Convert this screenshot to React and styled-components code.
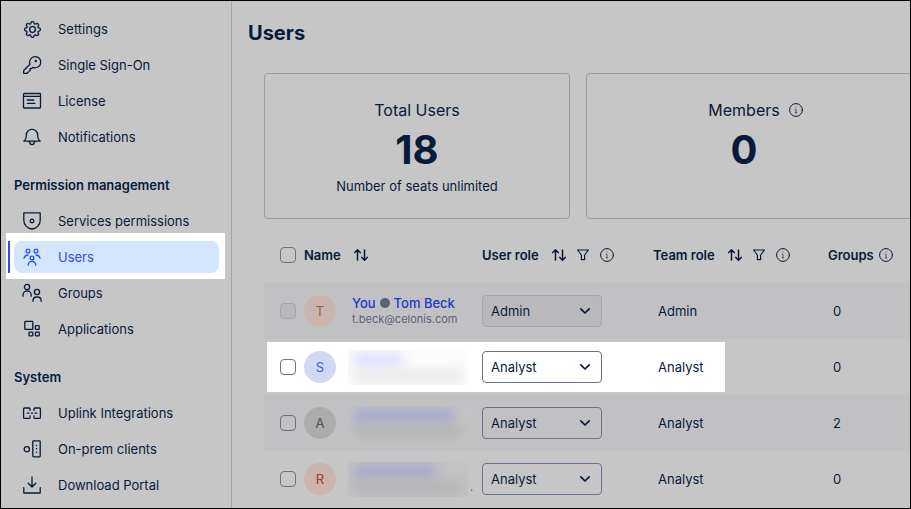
import styled, { createGlobalStyle } from 'styled-components'
import { BsGear } from 'react-icons/bs'

const colors = {
    background: '#c6c6c6',
    stripe: '#c1c1c3',
    line: '#a3a3a6',
    cardLine: '#9c9ca8',
    text: '#081a3a',
    secondaryText: '#5d6078',
    link: '#2338c6',
    active: '#2b4cf2',
    activeBackground: '#d4e5ff',
    control: '#6d6f8f',
    disabled: '#b9b9bb',
    disabledLine: '#a6a6aa',
}

const font = {
    small: '11px',
    text: '13px',
    label: '16px',
    title: '20px',
    figure: '40px',
}

const GlobalStyle = createGlobalStyle`
    * {
        box-sizing: border-box;
    }
    body {
        margin: 0;
        background-color: ${colors.background};
        color: ${colors.text};
        font-family: Inter, 'Liberation Sans', sans-serif;
        font-size: ${font.text};
        line-height: 20px;
    }
`
const Frame = styled.div`
    display: flex;
    min-height: 100vh;
    border: 1px solid #000000;
    overflow: hidden;
`
const SideBar = styled.nav`
    flex: 0 0 231px;
    padding: 10px 12px 0 13px;
    border-right: 1px solid ${colors.line};
`
const MenuTitle = styled.h2`
    height: 48px;
    margin: 0;
    padding-top: 12px;
    font-size: ${font.text};
    font-weight: 600;
    line-height: 36px;
`
const MenuList = styled.ul`
    margin: 0;
    padding: 0;
    list-style: none;
`
const MenuItem = styled.li`
    position: relative;
    z-index: 0;
    padding: 2px 0;

    &::before {
        content: '';
        display: ${(props) => (props.$active ? 'block' : 'none')};
        position: absolute;
        inset: -6px -6px -4px -8px;
        z-index: -1;
        background-color: #ffffff;
    }
    &::after {
        content: '';
        display: ${(props) => (props.$active ? 'block' : 'none')};
        position: absolute;
        top: 2px;
        bottom: 2px;
        left: -6px;
        width: 2px;
        background-color: ${colors.active};
    }
`
const MenuLink = styled.a`
    display: flex;
    align-items: center;
    gap: 16px;
    height: 32px;
    padding: 0 8px;
    border-radius: 8px;
    text-decoration: none;
    color: ${(props) => (props.$active ? colors.active : colors.text)};
    background-color: ${(props) =>
        props.$active ? colors.activeBackground : 'transparent'};
`
const Icon = styled.svg`
    flex: none;
    width: ${(props) => props.$size || 20}px;
    height: ${(props) => props.$size || 20}px;
    fill: none;
    stroke: currentColor;
    stroke-width: ${(props) => props.$stroke || 1.3};
    stroke-linecap: round;
    stroke-linejoin: round;
`
const IconBox = styled.span`
    display: grid;
    place-items: center;
    width: 20px;
    height: 20px;
`
const Main = styled.main`
    flex: 1;
    min-width: 0;
    padding: 16px 0 0 16px;
`
const PageTitle = styled.h1`
    margin: 0;
    font-size: ${font.title};
    font-weight: 700;
    line-height: 32px;
`
const Content = styled.div`
    padding: 24px 0 0 16px;
`
const Cards = styled.div`
    display: grid;
    grid-template-columns: 306px 1fr;
    gap: 16px;
    margin-right: -16px;
`
const Card = styled.section`
    display: grid;
    grid-template-columns: auto auto;
    grid-template-rows: 28px 52px 20px;
    column-gap: ${(props) => (props.$hasInfo ? '8px' : '0')};
    justify-content: center;
    align-items: center;
    justify-items: center;
    height: 146px;
    padding-top: 22px;
    align-content: start;
    border: 1px solid ${colors.cardLine};
    border-radius: 4px;
`
const CardLabel = styled.h3`
    grid-column: 1;
    margin: 0;
    font-size: ${font.label};
    font-weight: 400;
`
const CardFigure = styled.div`
    grid-column: 1;
    font-size: ${font.figure};
    font-weight: 700;
    line-height: 52px;
`
const CardNote = styled.div`
    grid-column: 1;
`
const UserTable = styled.table`
    width: 100%;
    margin-top: 8px;
    border-collapse: collapse;
    table-layout: fixed;
`
const Column = styled.col`
    width: ${(props) => props.$width};
`
const HeadCell = styled.th`
    height: 56px;
    padding: 0;
    text-align: left;
    font-weight: 600;
`
const HeadContent = styled.div`
    display: flex;
    align-items: center;
    gap: 8px;
`
const HeadLabel = styled.span`
    margin-right: ${(props) => (props.$tight ? '-4px' : '4px')};
`
const Row = styled.tr`
    position: relative;
    z-index: 0;
    background-color: ${(props) =>
        props.$striped ? colors.stripe : 'transparent'};
`
const Cell = styled.td`
    height: 56px;
    padding: 0 0 0 ${(props) => (props.$inset ? '5px' : '0')};
    vertical-align: middle;
`
const SelectCell = styled(Cell)`
    position: relative;

    &::before {
        content: '';
        display: ${(props) => (props.$spotlight ? 'block' : 'none')};
        position: absolute;
        top: 3px;
        left: 3px;
        width: 458px;
        height: 50px;
        z-index: -1;
        background-color: #ffffff;
    }
`
const CheckBox = styled.input`
    appearance: none;
    display: block;
    width: 16px;
    height: 16px;
    margin: 0 0 0 16px;
    border: 1px solid ${colors.control};
    border-radius: 4px;

    &:disabled {
        border-color: ${colors.disabledLine};
        background-color: ${colors.disabled};
    }
`
const Person = styled.div`
    display: flex;
    align-items: center;
    gap: 12px;
`
const Avatar = styled.span`
    flex: none;
    width: 32px;
    height: 32px;
    border-radius: 50%;
    text-align: center;
    line-height: 32px;
    color: ${(props) => props.$color};
    background-color: ${(props) => props.$background};
`
const Identity = styled.div`
    padding-left: 4px;
`
const NameLink = styled.a`
    display: flex;
    align-items: center;
    gap: 4px;
    height: 16px;
    font-weight: 500;
    text-decoration: none;
    color: ${colors.link};
`
const Dot = styled.span`
    width: 10px;
    height: 10px;
    border-radius: 50%;
    background-color: ${colors.secondaryText};
`
const Email = styled.div`
    font-size: ${font.small};
    line-height: 16px;
    color: ${colors.secondaryText};
`
const Redacted = styled.div`
    display: flex;
    flex-direction: column;
    gap: 2px;
    width: 120px;
    height: 35px;
    padding: 3px 6px;
    overflow: hidden;
    background-color: ${(props) => (props.$light ? '#fcfcfc' : '#c3c3c4')};
`
const Smear = styled.span`
    flex: none;
    width: ${(props) => props.$width};
    height: 14px;
    filter: blur(6px);
    background-color: ${(props) => props.$color};
`
const SmearEnd = styled.span`
    align-self: flex-end;
    margin-left: -10px;
    font-size: ${font.small};
    color: ${colors.secondaryText};
`
const SelectWrapper = styled.div`
    position: relative;
    width: 120px;
    color: ${colors.text};
`
const RoleSelect = styled.select`
    appearance: none;
    display: block;
    width: 100%;
    height: 32px;
    padding: 0 32px 0 8px;
    border: 1px solid ${colors.control};
    border-radius: 4px;
    background-color: transparent;
    color: ${colors.text};
    font: inherit;

    &:disabled {
        opacity: 1;
        border-color: ${colors.disabledLine};
        background-color: ${colors.disabled};
    }
`
const Chevron = styled(Icon)`
    position: absolute;
    top: 8px;
    right: 9px;
    pointer-events: none;
`
const IconButton = styled.button`
    display: block;
    width: 16px;
    height: 16px;
    padding: 0;
    border: 0;
    background: none;
    color: inherit;
    cursor: pointer;
`

const icons = {
    key: (
        <>
            <path d="M8 9.2A5.6 5.6 0 1 1 11 12.3L9.6 13.6H8.2v1.6L6.8 16.6 5 18.3H1.7v-2.8z" />
            <circle cx="13.8" cy="6.1" r="0.6" />
        </>
    ),
    license: (
        <>
            <rect x="1.5" y="2.5" width="17" height="14.5" rx="0.8" />
            <path d="M1.5 5.4h17M5.3 9h6.4M5.3 12.3h7.6" />
        </>
    ),
    bell: (
        <path d="M1.8 14.2h16.4c-1.6-1.2-2.5-2.8-2.5-5V8a5.7 5.7 0 0 0-11.4 0v1.2c0 2.2-.9 3.8-2.5 5zM7.4 14.6c.2 1.9 1.2 3 2.6 3s2.4-1.1 2.6-3" />
    ),
    shield: (
        <>
            <path d="M1.8 1.8h16.4v7.4c0 4.6-3.4 8.2-8.2 8.8-4.8-.6-8.2-4.2-8.2-8.8z" />
            <circle cx="10" cy="10" r="1.8" />
        </>
    ),
    users: (
        <>
            <circle cx="6" cy="4" r="1.9" />
            <circle cx="14" cy="4" r="1.9" />
            <circle cx="10" cy="11" r="1.9" />
            <path d="M6.2 18.2a3.8 3.8 0 0 1 7.6 0M2 11.2a4.2 4.2 0 0 1 4-3.2M18 11.2A4.2 4.2 0 0 0 14 8" />
        </>
    ),
    groups: (
        <>
            <circle cx="5" cy="4" r="2.6" />
            <circle cx="15" cy="9" r="2.6" />
            <path d="M1 13.2v-1.4A3.8 3.8 0 0 1 4.8 8h.6a3.8 3.8 0 0 1 3.8 3.8v1.4M11 18.4v-1A3.6 3.6 0 0 1 14.6 14h.9a3.6 3.6 0 0 1 3.6 3.4v1" />
        </>
    ),
    apps: (
        <>
            <rect x="2.8" y="2.4" width="8" height="8" rx="0.6" />
            <rect x="13.4" y="6.6" width="3.8" height="3.8" rx="0.6" />
            <rect x="7" y="13.1" width="3.8" height="3.8" rx="0.6" />
            <rect x="13.4" y="13.1" width="3.8" height="3.8" rx="0.6" />
        </>
    ),
    uplink: (
        <>
            <path d="M8 7.4V6a1 1 0 0 0-1-1H2.6a1 1 0 0 0-1 1v8.4a1 1 0 0 0 1 1H7a1 1 0 0 0 1-1V13M12 7.4V6a1 1 0 0 1 1-1h4.4a1 1 0 0 1 1 1v8.4a1 1 0 0 1-1 1H13a1 1 0 0 1-1-1V13" />
            <path d="M5.4 10.2h1.6M9.4 10.2h1.2M13 10.2h1.6" />
        </>
    ),
    onPrem: (
        <>
            <circle cx="4.8" cy="10.2" r="2.6" />
            <rect x="10.8" y="1.8" width="7.4" height="16" rx="0.8" />
            <path d="M14.5 6.3v.2M14.5 9.7v.2M14.5 13.1v.2" />
        </>
    ),
    download: (
        <path d="M1.8 12.6V18h16.4v-5.4M10 1.8v10M6.2 8.2l3.8 3.8 3.8-3.8" />
    ),
}

const menus = [
    {
        items: [
            { label: 'Settings', icon: 'settings' },
            { label: 'Single Sign-On', icon: 'key' },
            { label: 'License', icon: 'license' },
            { label: 'Notifications', icon: 'bell' },
        ],
    },
    {
        title: 'Permission management',
        items: [
            { label: 'Services permissions', icon: 'shield' },
            { label: 'Users', icon: 'users', active: true },
            { label: 'Groups', icon: 'groups' },
            { label: 'Applications', icon: 'apps' },
        ],
    },
    {
        title: 'System',
        items: [
            { label: 'Uplink Integrations', icon: 'uplink' },
            { label: 'On-prem clients', icon: 'onPrem' },
            { label: 'Download Portal', icon: 'download' },
        ],
    },
]

const users = [
    {
        initial: 'T',
        color: '#a85c3e',
        background: '#c9b5ae',
        name: 'Tom Beck',
        email: 't.beck@celonis.com',
        role: 'Admin',
        groups: 0,
        self: true,
    },
    {
        initial: 'S',
        color: '#3f5fd2',
        background: '#d2d8f1',
        smears: ['48px', '108px'],
        role: 'Analyst',
        groups: 0,
        spotlight: true,
    },
    {
        initial: 'A',
        color: '#4d4d4d',
        background: '#acacac',
        smears: ['100px', '108px'],
        role: 'Analyst',
        groups: 2,
    },
    {
        initial: 'R',
        color: '#95431a',
        background: '#c9b5ae',
        smears: ['82px', '108px'],
        role: 'Analyst',
        groups: 0,
        trailing: '.',
    },
]

function InfoIcon() {
    return (
        <Icon viewBox="0 0 16 16" $size={16} $stroke={1}>
            <circle cx="8" cy="8" r="6.4" />
            <path
                d="M7.3 7.3H8v3.4M7.2 10.8h1.6M8 5v.2"
                strokeWidth="0.8"
                opacity="0.8"
            />
        </Icon>
    )
}

function SortButton({ label }) {
    return (
        <IconButton aria-label={label}>
            <Icon viewBox="0 0 16 16" $size={16} $stroke={1.5}>
                <path d="M4.5 13V3M1.8 5.6l2.7-2.8 2.7 2.8M11.5 3v10M8.8 10.4l2.7 2.8 2.7-2.8" />
            </Icon>
        </IconButton>
    )
}

function FilterButton({ label }) {
    return (
        <IconButton aria-label={label}>
            <Icon viewBox="0 0 16 16" $size={16} $stroke={1.2}>
                <path d="M2.6 3h10.8L9.6 8v4.6H6.4V8z" />
            </Icon>
        </IconButton>
    )
}

function Menu({ title, items }) {
    return (
        <>
            {title && <MenuTitle>{title}</MenuTitle>}
            <MenuList>
                {items.map((item) => (
                    <MenuItem key={item.label} $active={item.active}>
                        <MenuLink href="#" $active={item.active}>
                            {item.icon === 'settings' ? (
                                <IconBox>
                                    <BsGear size={17} strokeWidth={0.3} />
                                </IconBox>
                            ) : (
                                <Icon viewBox="0 0 20 20">
                                    {icons[item.icon]}
                                </Icon>
                            )}
                            {item.label}
                        </MenuLink>
                    </MenuItem>
                ))}
            </MenuList>
        </>
    )
}

function UserRow({ user, striped }) {
    return (
        <Row $striped={striped}>
            <SelectCell $spotlight={user.spotlight}>
                <CheckBox
                    type="checkbox"
                    disabled={user.self}
                    aria-label={`Select ${user.initial}`}
                />
            </SelectCell>
            <Cell>
                <Person>
                    <Avatar $color={user.color} $background={user.background}>
                        {user.initial}
                    </Avatar>
                    {user.name ? (
                        <Identity>
                            <NameLink href="#">
                                You <Dot /> {user.name}
                            </NameLink>
                            <Email>{user.email}</Email>
                        </Identity>
                    ) : (
                        <Redacted $light={user.spotlight}>
                            <Smear
                                $width={user.smears[0]}
                                $color={user.spotlight ? '#dcdefc' : '#a6a8cc'}
                            />
                            <Smear
                                $width={user.smears[1]}
                                $color={user.spotlight ? '#e9e9ea' : '#b4b4b6'}
                            />
                        </Redacted>
                    )}
                    {user.trailing && <SmearEnd>{user.trailing}</SmearEnd>}
                </Person>
            </Cell>
            <Cell>
                <SelectWrapper>
                    <RoleSelect
                        defaultValue={user.role}
                        disabled={user.self}
                        aria-label={`User role of ${user.initial}`}
                    >
                        <option>Admin</option>
                        <option>Analyst</option>
                    </RoleSelect>
                    <Chevron viewBox="0 0 16 16" $size={16} $stroke={1.7}>
                        <path d="M3.8 5.8L8 10l4.2-4.2" />
                    </Chevron>
                </SelectWrapper>
            </Cell>
            <Cell $inset>{user.role}</Cell>
            <Cell $inset>{user.groups}</Cell>
        </Row>
    )
}

function App() {
    return (
        <>
            <GlobalStyle />
            <Frame>
                <SideBar>
                    {menus.map((menu, index) => (
                        <Menu key={index} {...menu} />
                    ))}
                </SideBar>
                <Main>
                    <PageTitle>Users</PageTitle>
                    <Content>
                        <Cards>
                            <Card>
                                <CardLabel>Total Users</CardLabel>
                                <CardFigure>18</CardFigure>
                                <CardNote>Number of seats unlimited</CardNote>
                            </Card>
                            <Card $hasInfo>
                                <CardLabel>Members</CardLabel>
                                <InfoIcon />
                                <CardFigure>0</CardFigure>
                            </Card>
                        </Cards>
                        <UserTable>
                            <colgroup>
                                <Column $width="40px" />
                                <Column $width="178px" />
                                <Column $width="171px" />
                                <Column $width="175px" />
                                <Column $width="auto" />
                            </colgroup>
                            <thead>
                                <tr>
                                    <HeadCell>
                                        <CheckBox
                                            type="checkbox"
                                            aria-label="Select all"
                                        />
                                    </HeadCell>
                                    <HeadCell>
                                        <HeadContent>
                                            <HeadLabel>Name</HeadLabel>
                                            <SortButton label="Sort by name" />
                                        </HeadContent>
                                    </HeadCell>
                                    <HeadCell>
                                        <HeadContent>
                                            <HeadLabel>User role</HeadLabel>
                                            <SortButton label="Sort by user role" />
                                            <FilterButton label="Filter by user role" />
                                            <InfoIcon />
                                        </HeadContent>
                                    </HeadCell>
                                    <HeadCell>
                                        <HeadContent>
                                            <HeadLabel>Team role</HeadLabel>
                                            <SortButton label="Sort by team role" />
                                            <FilterButton label="Filter by team role" />
                                            <InfoIcon />
                                        </HeadContent>
                                    </HeadCell>
                                    <HeadCell>
                                        <HeadContent>
                                            <HeadLabel $tight>Groups</HeadLabel>
                                            <InfoIcon />
                                        </HeadContent>
                                    </HeadCell>
                                </tr>
                            </thead>
                            <tbody>
                                {users.map((user, index) => (
                                    <UserRow
                                        key={user.initial}
                                        user={user}
                                        striped={index % 2 === 0}
                                    />
                                ))}
                            </tbody>
                        </UserTable>
                    </Content>
                </Main>
            </Frame>
        </>
    )
}

export default App
